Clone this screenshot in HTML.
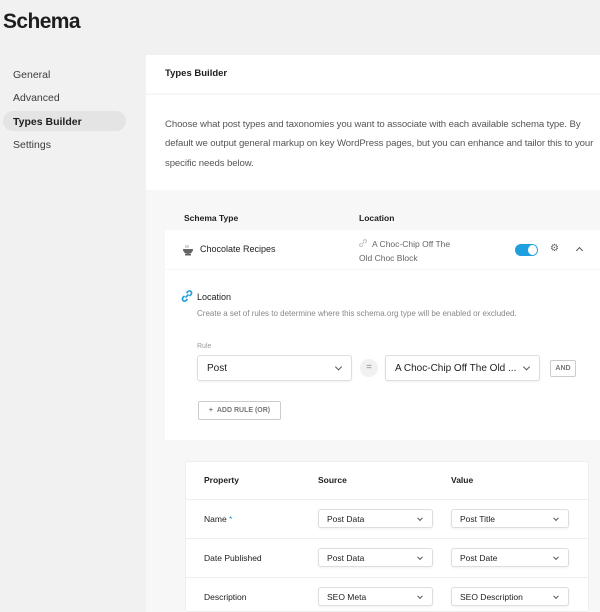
<!DOCTYPE html>
<html><head><meta charset="utf-8"><style>
*{box-sizing:border-box;margin:0;padding:0}
body{width:600px;height:612px;overflow:hidden;background:#f1f1f1;font-family:"Liberation Sans",sans-serif;color:#1e1e1e;position:relative}
.a{position:absolute}
.nav{left:13px;font-size:10.5px;color:#3c3c3c}
.sel{background:#fff;border:1px solid #ddd;border-radius:3px;box-shadow:0 1px 2px rgba(0,0,0,.06)}
.chev{position:absolute;right:10px;top:50%;width:5px;height:5px;border-right:1.3px solid #555;border-bottom:1.3px solid #555;transform:translateY(-70%) rotate(45deg)}
.b{font-weight:bold;font-size:8.5px;color:#1e1e1e}
.t{font-size:8.5px;color:#222}
</style></head><body>
<div class="a" style="left:3px;top:10px;font-size:21px;font-weight:bold;color:#1e1e1e;letter-spacing:-0.6px">Schema</div>
<div class="a nav" style="top:69px">General</div>
<div class="a nav" style="top:92px">Advanced</div>
<div class="a" style="left:3px;top:111px;width:123px;height:20px;background:#e4e4e4;border-radius:10px"></div>
<div class="a nav" style="top:116px;color:#1e1e1e;font-weight:bold">Types Builder</div>
<div class="a nav" style="top:139px">Settings</div>

<div class="a" style="left:146px;top:55px;width:454px;height:557px;background:#f7f7f7"></div>
<div class="a" style="left:146px;top:55px;width:454px;height:38px;background:#fff"></div>
<div class="a" style="left:165px;top:68px;font-size:9.5px;font-weight:bold">Types Builder</div>
<div class="a" style="left:146px;top:95px;width:454px;height:95px;background:#fff"></div>
<div class="a" style="left:165px;top:115px;width:432px;font-size:9.6px;line-height:19.3px;color:#555;letter-spacing:-0.1px">Choose what post types and taxonomies you want to associate with each available schema type. By default we output general markup on key WordPress pages, but you can enhance and tailor this to your specific needs below.</div>

<div class="a b" style="left:184px;top:213px">Schema Type</div>
<div class="a b" style="left:359px;top:213px">Location</div>
<div class="a" style="left:165px;top:230px;width:435px;height:39px;background:#fff"></div>
<svg class="a" style="left:182px;top:244px" width="12" height="12" viewBox="0 0 12 12"><path d="M1 5h10c0 3-2 5-5 5S1 8 1 5z" fill="#666"/><rect x="3" y="10" width="6" height="1.5" fill="#666"/><path d="M4 1v3M6 1v3" stroke="#999" stroke-width=".8"/></svg>
<div class="a t" style="left:200px;top:244px;font-size:9px">Chocolate Recipes</div>
<svg class="a" style="left:359px;top:239px" width="8" height="8" viewBox="0 0 8 8"><path d="M3 5L5 3M2 4L1 5a1.4 1.4 0 002 2l1-1M6 4l1-1a1.4 1.4 0 00-2-2L4 2" stroke="#bbb" fill="none"/></svg>
<div class="a" style="left:359px;top:237px;font-size:8.5px;line-height:14px;color:#666;width:100px;text-indent:13px">A Choc-Chip Off The Old Choc Block</div>
<div class="a" style="left:515px;top:244px;width:23px;height:12px;border-radius:6px;background:#1f9ee0"></div>
<div class="a" style="left:528px;top:245px;width:9px;height:10px;border-radius:50%;background:#fff"></div>
<div class="a" style="left:550px;top:243px;font-size:10px;color:#666">⚙</div>
<div class="a" style="left:577px;top:248px;width:5px;height:5px;border-left:1.3px solid #555;border-top:1.3px solid #555;transform:rotate(45deg)"></div>

<div class="a" style="left:165px;top:270px;width:435px;height:170px;background:#fff"></div>
<svg class="a" style="left:181px;top:290px" width="12" height="12" viewBox="0 0 12 12"><path d="M4.5 7.5l3-3M3.5 6L2 7.5a2 2 0 003 3L6.5 9M8.5 6L10 4.5a2 2 0 00-3-3L5.5 3" stroke="#1f9ee0" stroke-width="1.6" fill="none"/></svg>
<div class="a t" style="left:197px;top:292px;font-size:9px">Location</div>
<div class="a" style="left:197px;top:309px;font-size:8px;color:#888">Create a set of rules to determine where this schema.org type will be enabled or excluded.</div>
<div class="a" style="left:197px;top:343px;font-size:7px;color:#999">Rule</div>
<div class="a sel" style="left:197px;top:355px;width:155px;height:26px"><span class="a" style="left:9px;top:7px;font-size:10px">Post</span><i class="chev"></i></div>
<div class="a" style="left:360px;top:359px;width:18px;height:18px;border-radius:50%;background:#f1f1f1;text-align:center;font-size:10px;line-height:18px;color:#888">=</div>
<div class="a sel" style="left:385px;top:355px;width:155px;height:26px"><span class="a" style="left:9px;top:7px;font-size:10px">A Choc-Chip Off The Old ...</span><i class="chev"></i></div>
<div class="a" style="left:550px;top:360px;width:26px;height:17px;border:1px solid #ccc;border-radius:2px;font-size:7px;font-weight:bold;color:#777;text-align:center;line-height:15px">AND</div>
<div class="a" style="left:198px;top:401px;width:83px;height:19px;border:1px solid #ccc;border-radius:2px;font-size:7px;font-weight:bold;color:#777;text-align:center;line-height:17px">+&nbsp;&nbsp;ADD RULE (OR)</div>

<div class="a" style="left:185px;top:461px;width:404px;height:151px;background:#fff;border:1px solid #eee;border-radius:3px"></div>
<div class="a b" style="left:204px;top:475px">Property</div>
<div class="a b" style="left:318px;top:475px">Source</div>
<div class="a b" style="left:451px;top:475px">Value</div>
<div class="a" style="left:185px;top:499px;width:404px;height:1px;background:#eee"></div>
<div class="a" style="left:185px;top:538px;width:404px;height:1px;background:#eee"></div>
<div class="a" style="left:185px;top:577px;width:404px;height:1px;background:#eee"></div>
<div class="a t" style="left:204px;top:514px">Name <span style="color:#1f9ee0">*</span></div>
<div class="a t" style="left:204px;top:553px">Date Published</div>
<div class="a t" style="left:204px;top:592px">Description</div>
<div class="a sel" style="left:318px;top:509px;width:115px;height:19px"><span class="a t" style="left:8px;top:4px">Post Data</span><i class="chev" style="width:4px;height:4px"></i></div>
<div class="a sel" style="left:451px;top:509px;width:118px;height:19px"><span class="a t" style="left:8px;top:4px">Post Title</span><i class="chev" style="width:4px;height:4px"></i></div>
<div class="a sel" style="left:318px;top:548px;width:115px;height:19px"><span class="a t" style="left:8px;top:4px">Post Data</span><i class="chev" style="width:4px;height:4px"></i></div>
<div class="a sel" style="left:451px;top:548px;width:118px;height:19px"><span class="a t" style="left:8px;top:4px">Post Date</span><i class="chev" style="width:4px;height:4px"></i></div>
<div class="a sel" style="left:318px;top:587px;width:115px;height:19px"><span class="a t" style="left:8px;top:4px">SEO Meta</span><i class="chev" style="width:4px;height:4px"></i></div>
<div class="a sel" style="left:451px;top:587px;width:118px;height:19px"><span class="a t" style="left:8px;top:4px">SEO Description</span><i class="chev" style="width:4px;height:4px"></i></div>
</body></html>
